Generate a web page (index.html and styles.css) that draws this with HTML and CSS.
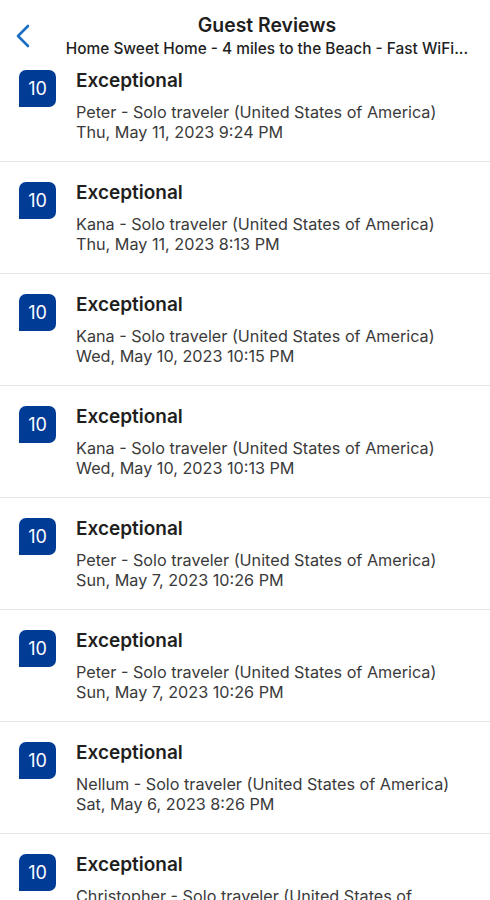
FILE: index.html
```html
<!DOCTYPE html>
<html>
<head>
<meta charset="utf-8">
<link rel="stylesheet" href="styles.css">
</head>
<body>
<header class="topbar">
  <div class="back">
    <svg width="16" height="24" viewBox="0 0 16 24"><path d="M13 2 L3 12 L13 22" fill="none" stroke="#1c6ec3" stroke-width="2.6" stroke-linecap="round" stroke-linejoin="round"/></svg>
  </div>
  <div class="titles">
    <div class="title">Guest Reviews</div>
    <div class="subtitle">Home Sweet Home - 4 miles to the Beach - Fast WiFi...</div>
  </div>
</header>
<ul class="reviews">
  <li class="review"><div class="badge">10</div><div class="body"><div class="label">Exceptional</div><div class="meta">Peter - Solo traveler (United States of America)</div><div class="meta">Thu, May 11, 2023 9:24 PM</div></div></li>
  <li class="review"><div class="badge">10</div><div class="body"><div class="label">Exceptional</div><div class="meta">Kana - Solo traveler (United States of America)</div><div class="meta">Thu, May 11, 2023 8:13 PM</div></div></li>
  <li class="review"><div class="badge">10</div><div class="body"><div class="label">Exceptional</div><div class="meta">Kana - Solo traveler (United States of America)</div><div class="meta">Wed, May 10, 2023 10:15 PM</div></div></li>
  <li class="review"><div class="badge">10</div><div class="body"><div class="label">Exceptional</div><div class="meta">Kana - Solo traveler (United States of America)</div><div class="meta">Wed, May 10, 2023 10:13 PM</div></div></li>
  <li class="review"><div class="badge">10</div><div class="body"><div class="label">Exceptional</div><div class="meta">Peter - Solo traveler (United States of America)</div><div class="meta">Sun, May 7, 2023 10:26 PM</div></div></li>
  <li class="review"><div class="badge">10</div><div class="body"><div class="label">Exceptional</div><div class="meta">Peter - Solo traveler (United States of America)</div><div class="meta">Sun, May 7, 2023 10:26 PM</div></div></li>
  <li class="review"><div class="badge">10</div><div class="body"><div class="label">Exceptional</div><div class="meta">Nellum - Solo traveler (United States of America)</div><div class="meta">Sat, May 6, 2023 8:26 PM</div></div></li>
  <li class="review"><div class="badge">10</div><div class="body"><div class="label">Exceptional</div><div class="meta">Christopher - Solo traveler (United States of America)</div><div class="meta">Fri, May 5, 2023 7:12 PM</div></div></li>
</ul>
</body>
</html>
```
FILE: styles.css
```css
html, body {
  margin: 0;
  padding: 0;
  background: #ffffff;
  height: 900px;
  overflow: hidden;
}
body {
  font-family: Inter, "Noto Sans", sans-serif;
  color: #262626;
}
.topbar {
  display: flex;
  height: 60px;
}
.back {
  width: 44px;
  flex: none;
  padding: 24px 0 0 15px;
  box-sizing: border-box;
}
.back svg { display: block; }
.titles {
  flex: 1;
  display: flex;
  flex-direction: column;
  align-items: center;
  padding-top: 12px;
}
.title {
  font-size: 19.4px;
  font-weight: 600;
  line-height: 26px;
  color: #1f1f1f;
}
.subtitle {
  font-size: 15.4px;
  font-weight: 500;
  line-height: 22px;
  color: #1f1f1f;
  white-space: nowrap;
}
.reviews {
  list-style: none;
  margin: 0;
  padding: 0;
}
.review {
  display: flex;
  gap: 20px;
  padding: 19px 40px 19px 19px;
  border-bottom: 1px solid #e4e4e4;
  height: 112px;
  box-sizing: border-box;
}
.review:first-child {
  height: 102px;
  padding-top: 9px;
}
.badge {
  width: 37px;
  height: 37px;
  flex: none;
  background: #003b95;
  color: #ffffff;
  border-radius: 7px 7px 7px 0;
  display: flex;
  align-items: center;
  justify-content: center;
  font-size: 18px;
  margin-top: 1px;
}
.body {
  display: flex;
  flex-direction: column;
}
.label {
  font-size: 19px;
  font-weight: 600;
  line-height: 24px;
  color: #1f1f1f;
  margin-bottom: 9px;
}
.meta {
  font-size: 16.2px;
  line-height: 20px;
  color: #3a3a3a;
}
```
